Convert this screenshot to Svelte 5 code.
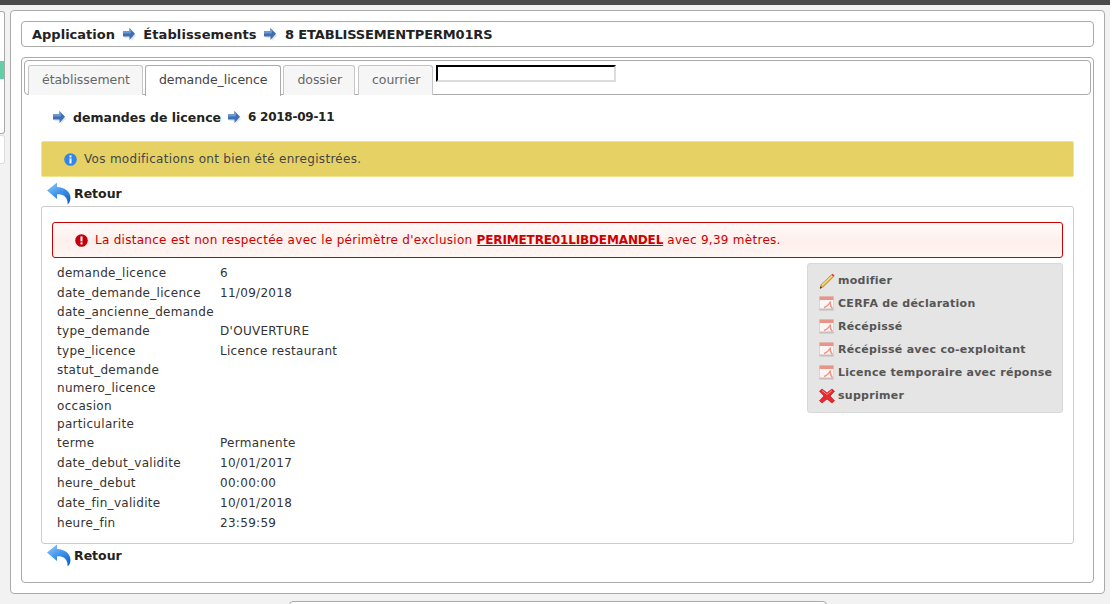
<script>
  const fields = [
    ["demande_licence", "6"],
    ["date_demande_licence", "11/09/2018"],
    ["date_ancienne_demande", ""],
    ["type_demande", "D'OUVERTURE"],
    ["type_licence", "Licence restaurant"],
    ["statut_demande", ""],
    ["numero_licence", ""],
    ["occasion", ""],
    ["particularite", ""],
    ["terme", "Permanente"],
    ["date_debut_validite", "10/01/2017"],
    ["heure_debut", "00:00:00"],
    ["date_fin_validite", "10/01/2018"],
    ["heure_fin", "23:59:59"]
  ];
  const tabs = ["établissement", "demande_licence", "dossier", "courrier"];
  const actions = [
    ["edit", "modifier"],
    ["pdf", "CERFA de déclaration"],
    ["pdf", "Récépissé"],
    ["pdf", "Récépissé avec co-exploitant"],
    ["pdf", "Licence temporaire avec réponse"],
    ["del", "supprimer"]
  ];
</script>

{#snippet arrow()}
  <svg class="arrow" width="13" height="13" viewBox="0 0 13 13">
    <path d="M0.5 4.5L1.5 10H8V13L13 7.5L8 2V4.5Z" fill="#dfe6f0" />
    <path d="M0 3H6.5V0L12 5.7L6.5 12V8.5H0Z" fill="#3f6fb3" />
    <path d="M0 3H6.5V0L8.5 2.2L7.5 5.5H0Z" fill="#6d98d0" />
  </svg>
{/snippet}

{#snippet retour()}
  <div class="retour">
    <svg width="24" height="23" viewBox="0 0 24 23">
      <defs>
        <linearGradient id="ret" x1="0" y1="0" x2="0.7" y2="1">
          <stop offset="0" stop-color="#9accf9" />
          <stop offset="0.55" stop-color="#3f94ec" />
          <stop offset="1" stop-color="#1668c8" />
        </linearGradient>
      </defs>
      <path d="M0 8.5L10 0.5V5C18 5 23.5 10 23.5 16C23.5 18.5 22.5 21 20.5 22.5C21 19.5 20 15 15.5 13C14 12.4 12 12.2 10 12.4V17Z" fill="url(#ret)" />
    </svg>
    <span>Retour</span>
  </div>
{/snippet}

{#snippet actionIcon(kind)}
  {#if kind === "edit"}
    <svg width="16" height="16" viewBox="0 0 16 16">
      <path d="M1 15.5L2.2 11.5L12.5 1.8L14.5 3.8L4.5 13.8Z" fill="#e9b04a" stroke="#8a6a30" stroke-width="0.5" />
      <path d="M2.8 11.5L12.9 2.2L13.6 2.9L3.6 12.5Z" fill="#f6dc8c" />
      <path d="M12.5 1.8L13.6 0.7L15.6 2.7L14.5 3.8Z" fill="#d8393c" />
      <path d="M1 15.5L1.6 13.2L3 14.7Z" fill="#2f2a22" />
    </svg>
  {:else if kind === "pdf"}
    <svg width="15" height="15" viewBox="0 0 15 15">
      <rect x="0" y="0" width="15" height="15" rx="0.5" fill="#dcd6d6" />
      <rect x="1" y="4" width="13" height="8.5" fill="#fbf6f5" />
      <rect x="0.5" y="0.5" width="14" height="3.5" fill="#ea9488" />
      <path d="M5 11.5C8 10.5 10 8.5 11.5 5.5C11 8.5 11.5 10.5 13.5 12.5" fill="none" stroke="#f09488" stroke-width="1.4" />
      <path d="M0.5 13.5H14.5" stroke="#c6bebe" stroke-width="1.6" />
    </svg>
  {:else}
    <svg width="16" height="16" viewBox="0 0 16 16">
      <path d="M3 1L8 5L13 1L15.5 3.2L11 8L15.5 12.8L13 15L8 11L3 15L0.5 12.8L5 8L0.5 3.2Z" fill="#e52a30" stroke="#c4242a" stroke-width="0.8" stroke-linejoin="round" />
      <path d="M3 2.5L8 6.5L13 2.5" fill="none" stroke="#f78a8a" stroke-width="1" />
    </svg>
  {/if}
{/snippet}

<div class="page">
  <div class="topbar"></div>
  <div class="sidebar">
    <div class="side-box one"><div class="green"></div></div>
    <div class="side-box two"></div>
  </div>

  <main class="panel">
    <nav class="crumb">
      <span>Application</span>
      {@render arrow()}
      <span class="spaced">Établissements</span>
      {@render arrow()}
      <span class="tight">8 ETABLISSEMENTPERM01RS</span>
    </nav>

    <section class="tabs-panel">
      <div class="tabbar">
        {#each tabs as t, i}
          <div class="tab" class:active={i === 1}>{t}</div>
        {/each}
        <input class="search" type="text" />
      </div>

      <div class="subcrumb">
        {@render arrow()}
        <span>demandes de licence</span>
        {@render arrow()}
        <span class="small">6 2018-09-11</span>
      </div>

      <div class="notice">
        <svg width="13" height="13" viewBox="0 0 13 13">
          <circle cx="6.5" cy="6.5" r="6.3" fill="#2f86f0" />
          <rect x="5.5" y="2.4" width="2" height="2" fill="#fff" />
          <rect x="5.5" y="5.4" width="2" height="5" fill="#fff" />
        </svg>
        <span>Vos modifications ont bien été enregistrées.</span>
      </div>

      {@render retour()}

      <div class="card">
        <div class="error">
          <svg width="13" height="13" viewBox="0 0 13 13">
            <circle cx="6.5" cy="6.5" r="6.3" fill="#c5000b" />
            <rect x="5.5" y="2.4" width="2" height="5" fill="#fff" />
            <rect x="5.5" y="8.4" width="2" height="2" fill="#fff" />
          </svg>
          <span>La distance est non respectée avec le périmètre d'exclusion <a href="#top">PERIMETRE01LIBDEMANDEL</a> avec 9,39 mètres.</span>
        </div>

        <div class="details">
          <dl class="fields">
            {#each fields as [label, value]}
              <div class="row" class:empty={!value}>
                <dt>{label}</dt>
                <dd>{value}</dd>
              </div>
            {/each}
          </dl>
          <ul class="actions">
            {#each actions as [kind, label]}
              <li>
                <span class="ico">{@render actionIcon(kind)}</span>
                <span>{label}</span>
              </li>
            {/each}
          </ul>
        </div>
      </div>

      {@render retour()}
    </section>
  </main>

  <div class="bottom-box"></div>
</div>

<style>
  :global(body) {
    margin: 0;
    background: #fff;
  }

  .page {
    position: relative;
    box-sizing: border-box;
    width: 1110px;
    height: 604px;
    padding: 10px 5px 0 10px;
    background: #f2f2f2;
    overflow: hidden;
    font-family: "DejaVu Sans", sans-serif;
    font-size: 12px;
    letter-spacing: 0.3px;
    color: #333;
  }

  .topbar {
    position: absolute;
    top: 0;
    left: 0;
    right: 0;
    height: 5px;
    background: #4b4b4b;
  }

  .sidebar {
    position: absolute;
    top: 11px;
    left: 0;
    width: 5px;
  }

  .side-box {
    box-sizing: border-box;
    background: #fff;
    border: 1px solid #aaa;
    border-left: 0;
    border-radius: 0 3px 3px 0;
  }

  .side-box.one {
    height: 123px;
    padding-top: 29px;
  }

  .side-box.two {
    height: 29px;
    margin-top: 1px;
    border-color: #ddd;
  }

  .green {
    height: 18px;
    margin-top: 20px;
    background: #5fd0a8;
  }

  .panel {
    box-sizing: border-box;
    height: 584px;
    padding: 10px;
    background: #fff;
    border: 1px solid #aaa;
    border-radius: 4px;
  }

  .crumb {
    box-sizing: border-box;
    display: flex;
    align-items: center;
    gap: 7.7px;
    height: 26px;
    padding-left: 10px;
    border: 1px solid #aaa;
    border-radius: 4px;
    font-size: 13px;
    font-weight: bold;
    color: #222;
    letter-spacing: 0;
  }

  .crumb .spaced {
    letter-spacing: 0.1px;
  }

  .crumb .tight {
    letter-spacing: -0.15px;
  }

  .arrow {
    flex: none;
  }

  .tabs-panel {
    box-sizing: border-box;
    height: 526px;
    margin-top: 10px;
    padding: 2px;
    border: 1px solid #aaa;
    border-radius: 4px;
  }

  .tabbar {
    box-sizing: border-box;
    display: flex;
    align-items: flex-start;
    gap: 2px;
    height: 35px;
    padding: 4px 0 0 3px;
    border: 1px solid #aaa;
    border-radius: 4px;
  }

  .tab {
    box-sizing: border-box;
    height: 30px;
    padding: 6px 12px 0 13px;
    background: #f6f6f6;
    border: 1px solid #c5c5c5;
    border-bottom: 0;
    border-radius: 3px 3px 0 0;
    font-size: 12.5px;
    letter-spacing: -0.05px;
    color: #666;
  }

  .tab:nth-child(4) {
    margin-left: 1px;
  }

  .tab.active {
    height: 31px;
    margin-bottom: -1px;
    padding-right: 13px;
    background: #fff;
    border-color: #aaa;
    color: #444;
    position: relative;
  }

  .search {
    box-sizing: border-box;
    width: 180px;
    height: 17px;
    margin: 0 0 0 1px;
    padding: 0;
    background: #fff;
    border: 2px inset #ddd;
    border-top-color: #000;
    border-left-color: #000;
  }

  .subcrumb {
    display: flex;
    align-items: center;
    gap: 7px;
    height: 18px;
    margin: 13px 0 0 29px;
    font-size: 12.5px;
    font-weight: bold;
    letter-spacing: 0;
    color: #222;
  }

  .subcrumb .small {
    font-size: 12px;
    letter-spacing: -0.25px;
  }

  .notice {
    box-sizing: border-box;
    display: flex;
    align-items: center;
    gap: 7px;
    height: 36px;
    margin: 15px 17px 0;
    padding-left: 22px;
    background: #e6d264;
    border: 1px solid #f2e48a;
    border-radius: 2px;
    color: #444;
  }

  .retour {
    display: flex;
    align-items: center;
    gap: 3px;
    height: 23px;
    margin: 5px 0 0 23px;
    font-size: 12.5px;
    font-weight: bold;
    letter-spacing: 0;
    color: #222;
  }

  .card {
    box-sizing: border-box;
    height: 338px;
    margin: 1px 17px -5px;
    padding: 15px 10px 0;
    border: 1px solid #ccc;
    border-radius: 3px;
  }

  .error {
    box-sizing: border-box;
    display: flex;
    align-items: center;
    gap: 7px;
    height: 36px;
    padding-left: 22px;
    background: linear-gradient(#fffaf9, #fdf0ec 55%, #fff6f3);
    border: 1px solid #cc0000;
    border-radius: 3px;
    letter-spacing: 0.28px;
    color: #cc0000;
  }

  .error a {
    color: #cc0000;
    font-weight: bold;
    letter-spacing: -0.14px;
  }

  .details {
    display: flex;
    justify-content: space-between;
    align-items: flex-start;
    margin-top: 5px;
  }

  .fields {
    margin: 0;
    padding: 0 0 0 5px;
  }

  .row {
    display: flex;
    align-items: center;
    height: 20px;
    line-height: 18px;
  }

  .row.empty {
    height: 18px;
  }

  .row dt {
    width: 163px;
  }

  .row dd {
    margin: 0;
  }

  .actions {
    box-sizing: border-box;
    width: 256px;
    height: 150px;
    margin: 0;
    padding: 5px 0 5px 11px;
    list-style: none;
    background: #e5e5e5;
    border: 1px solid #d8d8d8;
    border-radius: 3px;
    font-size: 11px;
    font-weight: bold;
    color: #555;
    letter-spacing: 0.27px;
    white-space: nowrap;
  }

  .actions li {
    display: flex;
    align-items: center;
    gap: 3px;
    height: 23px;
  }

  .ico {
    display: flex;
    width: 16px;
    flex: none;
  }

  .bottom-box {
    position: absolute;
    top: 601px;
    left: 289px;
    width: 536px;
    height: 10px;
    background: #fff;
    border: 1px solid #aaa;
    border-radius: 4px;
  }
</style>
